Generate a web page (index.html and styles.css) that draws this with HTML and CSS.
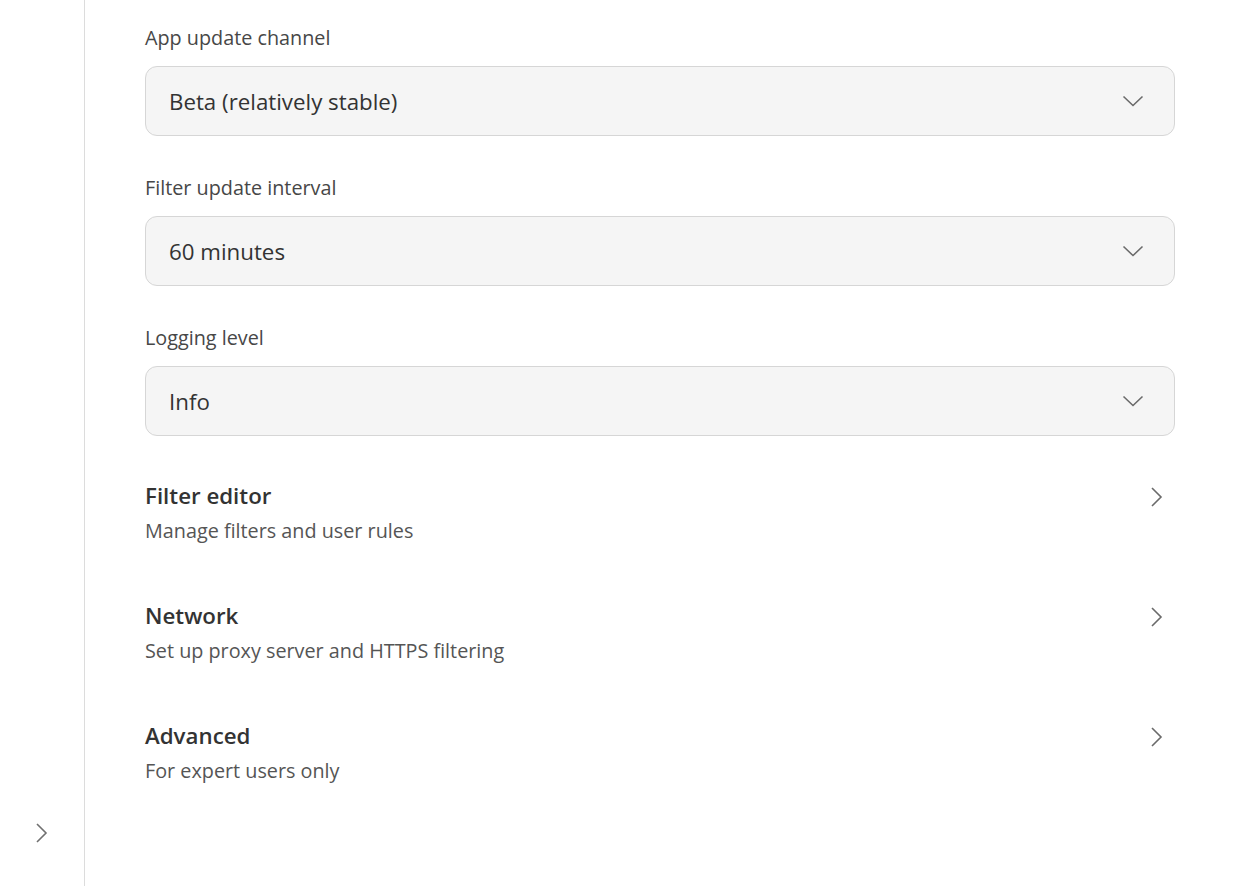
FILE: index.html
```html
<!DOCTYPE html>
<html>
<head>
<meta charset="utf-8">
<link rel="stylesheet" href="styles.css">
</head>
<body>
<div class="app">
  <aside class="sidebar">
    <div class="sidebar-toggle">
      <svg width="14" height="22" viewBox="0 0 14 22"><path d="M2 2 L11 11 L2 20" fill="none" stroke="#707070" stroke-width="1.6"/></svg>
    </div>
  </aside>
  <main class="main">
    <div class="field">
      <div class="label">App update channel</div>
      <div class="select">
        <span>Beta (relatively stable)</span>
        <svg class="chev-down" width="22" height="12" viewBox="0 0 22 12"><path d="M1.5 1.5 L11 10.5 L20.5 1.5" fill="none" stroke="#6a6a6a" stroke-width="1.6"/></svg>
      </div>
    </div>
    <div class="field">
      <div class="label">Filter update interval</div>
      <div class="select">
        <span>60 minutes</span>
        <svg class="chev-down" width="22" height="12" viewBox="0 0 22 12"><path d="M1.5 1.5 L11 10.5 L20.5 1.5" fill="none" stroke="#6a6a6a" stroke-width="1.6"/></svg>
      </div>
    </div>
    <div class="field">
      <div class="label">Logging level</div>
      <div class="select">
        <span>Info</span>
        <svg class="chev-down" width="22" height="12" viewBox="0 0 22 12"><path d="M1.5 1.5 L11 10.5 L20.5 1.5" fill="none" stroke="#6a6a6a" stroke-width="1.6"/></svg>
      </div>
    </div>
    <div class="links">
      <div class="link-row">
        <div class="link-text">
          <div class="link-title">Filter editor</div>
          <div class="link-sub">Manage filters and user rules</div>
        </div>
        <svg class="chev-right" width="14" height="22" viewBox="0 0 14 22"><path d="M2 2 L11 11 L2 20" fill="none" stroke="#6a6a6a" stroke-width="1.6"/></svg>
      </div>
      <div class="link-row">
        <div class="link-text">
          <div class="link-title">Network</div>
          <div class="link-sub">Set up proxy server and HTTPS filtering</div>
        </div>
        <svg class="chev-right" width="14" height="22" viewBox="0 0 14 22"><path d="M2 2 L11 11 L2 20" fill="none" stroke="#6a6a6a" stroke-width="1.6"/></svg>
      </div>
      <div class="link-row">
        <div class="link-text">
          <div class="link-title">Advanced</div>
          <div class="link-sub">For expert users only</div>
        </div>
        <svg class="chev-right" width="14" height="22" viewBox="0 0 14 22"><path d="M2 2 L11 11 L2 20" fill="none" stroke="#6a6a6a" stroke-width="1.6"/></svg>
      </div>
    </div>
  </main>
</div>
</body>
</html>
```
FILE: styles.css
```css
html, body {
  margin: 0;
  padding: 0;
  background: #ffffff;
  height: 100%;
  overflow: hidden;
}
body {
  font-family: "Open Sans", "Noto Sans", sans-serif;
  color: #333333;
}
.app {
  display: flex;
  height: 886px;
}
.sidebar {
  width: 84px;
  flex: none;
  border-right: 1px solid #dcdcdc;
  display: flex;
  flex-direction: column;
  justify-content: flex-end;
  align-items: center;
}
.sidebar-toggle {
  display: flex;
  align-items: center;
  justify-content: center;
  margin-bottom: 42px;
}
.main {
  flex: 1;
  padding: 26px 61px 0 60px;
}
.field {
  margin-bottom: 40px;
}
.label {
  font-size: 19.8px;
  line-height: 24px;
  color: #474747;
  margin-bottom: 16px;
}
.select {
  height: 68px;
  border: 1px solid #d6d6d6;
  border-radius: 12px;
  background: #f5f5f5;
  display: flex;
  align-items: center;
  justify-content: space-between;
  padding: 0 30px 0 23px;
  font-size: 22.3px;
  color: #333333;
}
.chev-down {
  display: block;
}
.links {
  padding-top: 6px;
}
.link-row {
  display: flex;
  align-items: flex-start;
  justify-content: space-between;
  height: 120px;
}
.link-title {
  font-size: 22.3px;
  font-weight: 600;
  line-height: 28px;
  color: #333333;
}
.link-sub {
  font-size: 19.8px;
  line-height: 24px;
  color: #555555;
  margin-top: 9px;
}
.chev-right {
  margin-top: 4px;
  margin-right: 11px;
}
```
